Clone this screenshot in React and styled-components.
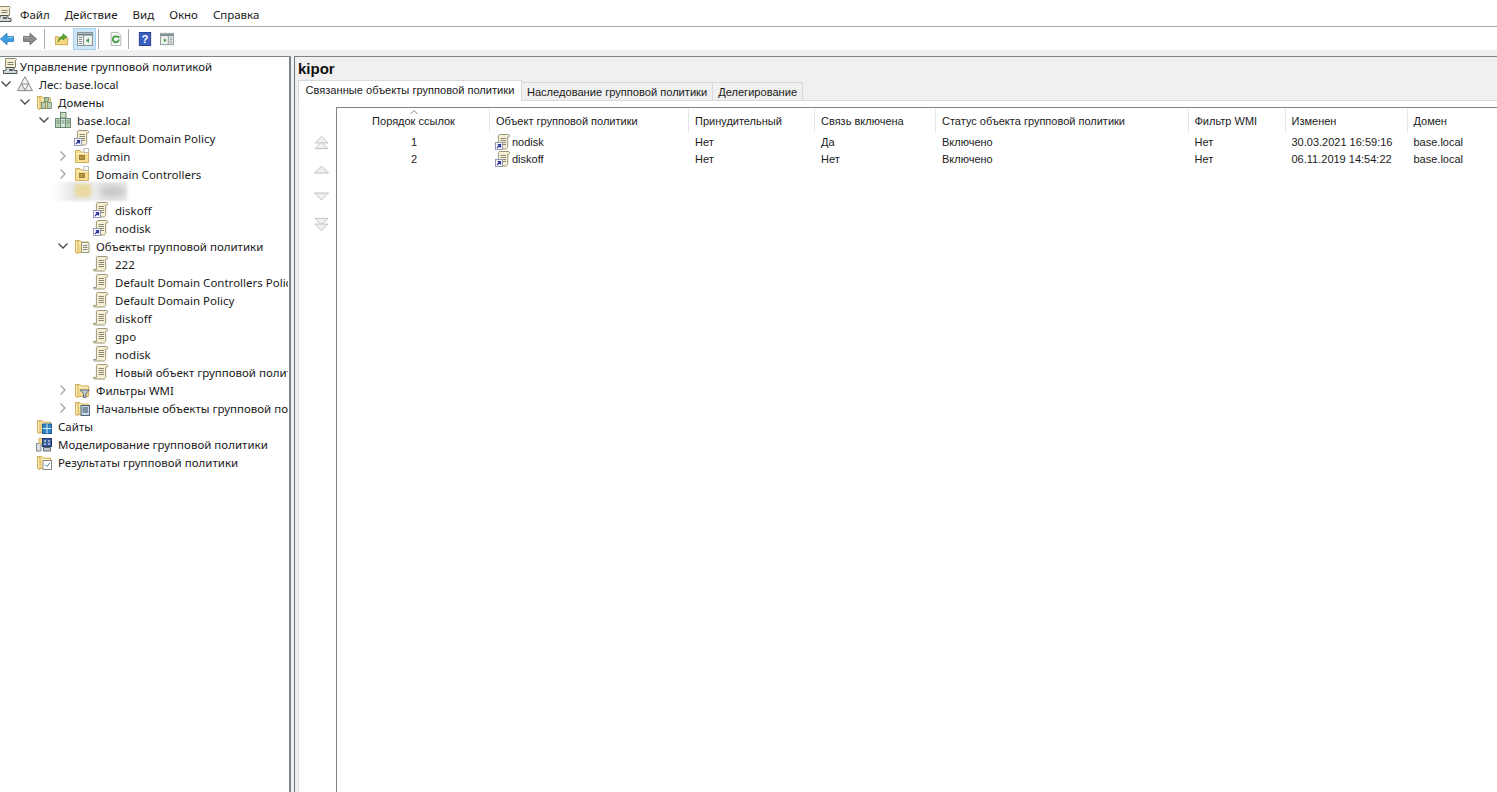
import React from "react";
import styled, { createGlobalStyle } from "styled-components";

const GlobalStyle = createGlobalStyle`
  html, body {
    margin: 0;
    padding: 0;
    height: 100%;
    background: #fff;
    overflow: hidden;
  }
  #root {
    height: 100%;
  }
`;

const Window = styled.div`
  display: flex;
  flex-direction: column;
  height: 792px;
  overflow: hidden;
  background: #f0f0f0;
  color: #1a1a1a;
  font-family: "Noto Sans", "Open Sans", sans-serif;
  font-size: 11.5px;
`;

const MenuBar = styled.div`
  display: flex;
  align-items: center;
  height: 24px;
  padding-top: 2px;
  flex: none;
  background: #fff;
  border-bottom: 1px solid #a8a8a8;
`;

const MenuIcon = styled.span`
  display: flex;
  width: 20px;
  margin-left: -4px;
  margin-right: 4px;
`;

const MenuItem = styled.span`
  margin-right: ${({ $gap }) => $gap}px;
`;

const Toolbar = styled.div`
  display: flex;
  align-items: center;
  height: 23px;
  flex: none;
  background: #fff;
`;

const ToolButton = styled.span`
  display: flex;
  align-items: center;
  justify-content: center;
  height: 22px;
  width: ${({ $w }) => $w || 16}px;
  margin-left: ${({ $ml }) => $ml || 0}px;
  box-sizing: border-box;
  background: ${({ $active }) => ($active ? "#cfe6f8" : "transparent")};
  border: 1px solid ${({ $active }) => ($active ? "#a6d2f2" : "transparent")};
`;

const ToolSep = styled.span`
  width: 1px;
  height: 20px;
  margin-left: ${({ $ml }) => $ml}px;
  background: #a8a8a8;
`;

const Body = styled.div`
  display: flex;
  flex: 1;
  min-height: 0;
  margin-top: 6px;
`;

const TreePane = styled.div`
  width: 289px;
  flex: none;
  background: #fff;
  border-top: 1px solid #7d8588;
  border-right: 2px solid #7d8588;
  overflow: hidden;
`;

const TreeRow = styled.div`
  position: relative;
  display: flex;
  align-items: center;
  height: 18px;
  width: 288px;
  overflow: ${({ $blurred }) => ($blurred ? "visible" : "hidden")};
  padding-left: ${({ $level, $root }) => ($root ? 2 : $level * 19)}px;
  box-sizing: border-box;
  white-space: nowrap;
`;

const Twisty = styled.span`
  display: flex;
  align-items: center;
  justify-content: center;
  width: 12px;
  height: 18px;
  margin-right: 5px;
  flex: none;
  visibility: ${({ $hidden }) => ($hidden ? "hidden" : "visible")};
`;

const TreeIcon = styled.span`
  display: flex;
  width: 16px;
  flex: none;
  margin-right: ${({ $root }) => ($root ? 2 : 6)}px;
`;

const Smudge = styled.span`
  position: absolute;
  left: 53px;
  top: -1px;
  width: 74px;
  height: 19px;
  background: linear-gradient(to right, #fff 0, #e6e6e6 27%, #ececec 55%, #e2e2e2 78%, #ececec 100%);
  filter: blur(1px);
`;

const SmudgeFolder = styled.span`
  position: absolute;
  left: 22px;
  top: 2px;
  width: 16px;
  height: 13px;
  background: #ead9a0;
  filter: blur(1.5px);
`;

const SmudgeMark = styled.span`
  position: absolute;
  left: 48px;
  top: 5px;
  width: 24px;
  height: 9px;
  background: #c4c4c4;
  filter: blur(3px);
`;

const DetailPane = styled.div`
  display: flex;
  flex-direction: column;
  flex: 1;
  min-width: 0;
  margin-left: 3px;
  padding-left: 3px;
  border-left: 1px solid #6f7578;
  border-top: 1px solid #7d8588;
`;

const DetailTitle = styled.div`
  height: 21px;
  flex: none;
  padding-top: 2px;
  font-family: "Liberation Sans", Arial, sans-serif;
  font-size: 15px;
  line-height: 19px;
  font-weight: 700;
  color: #111;
`;

const TabStrip = styled.div`
  display: flex;
  align-items: flex-end;
  height: 20px;
  flex: none;
  border-bottom: 1px solid #d9d9d9;
  font-family: "Liberation Sans", Arial, sans-serif;
  font-size: 11.1px;
`;

const Tab = styled.div`
  box-sizing: border-box;
  height: ${({ $active }) => ($active ? 21 : 18)}px;
  line-height: ${({ $active }) => ($active ? 18 : 19)}px;
  margin-bottom: ${({ $active }) => ($active ? -1 : 0)}px;
  padding: 0 ${({ $pad }) => $pad}px;
  background: ${({ $active }) => ($active ? "#fff" : "#f0f0f0")};
  border: 1px solid #d9d9d9;
  border-bottom: none;
  border-left: ${({ $active }) => ($active ? "1px solid #d9d9d9" : "none")};
  white-space: nowrap;
  position: relative;
`;

const TabPanel = styled.div`
  display: flex;
  flex: 1;
  min-height: 0;
  padding-top: 6px;
  background: #fff;
  border-left: 1px solid #e0e0e0;
`;

const MoverColumn = styled.div`
  display: flex;
  flex-direction: column;
  align-items: center;
  width: 37px;
  flex: none;
  padding-left: 7px;
  box-sizing: border-box;
`;

const Mover = styled.span`
  display: flex;
  margin-top: ${({ $mt }) => $mt}px;
`;

const ListFrame = styled.div`
  flex: 1;
  min-width: 0;
  border-top: 1px solid #7d8588;
  border-left: 1px solid #7d8588;
  font-family: "Liberation Sans", Arial, sans-serif;
  font-size: 11px;
  overflow: hidden;
`;

const columns = "153px 199px 126px 121px 252.5px 97px 122px 1fr";

const HeaderRow = styled.div`
  display: grid;
  grid-template-columns: ${columns};
  height: 25px;
  align-items: stretch;
`;

const HeaderCell = styled.div`
  position: relative;
  display: flex;
  align-items: center;
  justify-content: ${({ $center }) => ($center ? "center" : "flex-start")};
  padding-left: ${({ $center }) => ($center ? 1 : 6)}px;
  margin: 1px 0;
  border-right: ${({ $last }) => ($last ? "none" : "1px solid #e5e5e5")};
  white-space: nowrap;
`;

const SortMark = styled.span`
  position: absolute;
  top: -1px;
  left: 73px;
  display: flex;
`;

const DataRow = styled.div`
  display: grid;
  grid-template-columns: ${columns};
  height: 17px;
  align-items: center;
`;

const DataCell = styled.div`
  display: flex;
  align-items: center;
  justify-content: ${({ $center }) => ($center ? "center" : "flex-start")};
  padding-left: ${({ $center, $pad }) => ($center ? 1 : $pad || 6)}px;
  white-space: nowrap;
`;

const CellIcon = styled.span`
  display: flex;
  width: 16px;
  margin-right: 1px;
`;

/* icons */

const Svg = ({ size = 16, vb = "0 0 16 16", children }) => (
  <svg width={size} height={size} viewBox={vb} style={{ display: "block" }}>
    {children}
  </svg>
);

const ChevronDown = () => (
  <Svg size={12} vb="0 0 12 12">
    <path d="M1.5 3.5 6 8l4.5-4.5" fill="none" stroke="#4a4a4a" strokeWidth="1.4" />
  </Svg>
);

const ChevronRight = () => (
  <Svg size={12} vb="0 0 12 12">
    <path d="M3.5 1.5 8 6l-4.5 4.5" fill="none" stroke="#a6a6a6" strokeWidth="1.4" />
  </Svg>
);

const Scroll = ({ linked }) => (
  <Svg>
    <path
      d="M5 .5h8.4c.8 0 1.3.6 1.3 1.3 0 .7-.5 1.2-1.2 1.2H12.7v9.5c0 1.4-.8 2.5-2 2.5H1.8C.9 15 .3 14.3.3 13.5h3.1V2c0-.9.6-1.5 1.6-1.5z"
      fill="#f6efd4"
      stroke="#9a9778"
    />
    <path d="M5.5 4.5h5.5M5.5 6.5h5.5M5.5 8.5h5.5M5.5 10.5h5.5" stroke="#8a8a78" />
    {linked && (
      <>
        <rect x="0.5" y="8.5" width="7" height="7" fill="#fff" stroke="#9298b5" />
        <path d="M2 14l3-3M2.7 10.7H5.5v2.8" fill="none" stroke="#2b339a" strokeWidth="1.3" />
      </>
    )}
  </Svg>
);

const FolderBase = ({ children, open }) => (
  <Svg>
    <path d="M1.5 14.5V2.5h4.5l1.5 1.5h7v10.5z" fill="#f8de92" stroke="#d2b060" />
    <path d="M2.5 5.5h11.5" stroke="#fdf2c8" />
    {open && <path d="M1.5 2.5v12l2.5 1V3.5z" fill="#fcedb8" stroke="#d2b060" />}
    {children}
  </Svg>
);

const ServerBlocks = ({ x, y }) => (
  <g transform={`translate(${x} ${y})`}>
    <rect x="3" y="0" width="4" height="4" fill="#a9c4a2" stroke="#5d7d6c" strokeWidth="0.7" />
    <rect x="0" y="5" width="4" height="6" fill="#b8d0b0" stroke="#5d7d6c" strokeWidth="0.7" />
    <rect x="6" y="5" width="4" height="6" fill="#b8d0b0" stroke="#5d7d6c" strokeWidth="0.7" />
  </g>
);

const Domains = () => (
  <FolderBase open>
    <ServerBlocks x={5.5} y={3.5} />
  </FolderBase>
);

const Domain = () => (
  <Svg>
    <rect x="5.5" y="0.5" width="5.5" height="5.5" fill="#c7dcc0" stroke="#6b8a7c" />
    <rect x="0.5" y="6.5" width="5" height="9" fill="#bcd4b2" stroke="#6b8a7c" />
    <rect x="5.5" y="6.5" width="5" height="9" fill="#dceada" stroke="#6b8a7c" />
    <rect x="10.5" y="6.5" width="5" height="9" fill="#bcd4b2" stroke="#6b8a7c" />
    <path d="M1.5 9h3M1.5 11h3M11.5 9h3M11.5 11h3M6.5 9h3M6.5 11h3" stroke="#6b8a7c" />
  </Svg>
);

const Forest = () => (
  <Svg size={18} vb="0 0 18 18">
    <path d="M9 .8 13.5 9h-9z" fill="#f4f4f4" stroke="#7c7c7c" />
    <path d="M5 8.5 9.4 16.5H.6z" fill="#e4e4e4" stroke="#7c7c7c" />
    <path d="M13 8.5 17.4 16.5H8.6z" fill="#ececec" stroke="#7c7c7c" />
  </Svg>
);

const OrgUnit = () => (
  <FolderBase>
    <rect x="5.5" y="7.5" width="5" height="4" fill="#b4973f" stroke="#8a7230" strokeWidth="0.8" />
    <rect x="10" y="0.5" width="4.5" height="4" fill="#fff" stroke="#bcbcbc" />
  </FolderBase>
);

const GpoFolder = () => (
  <FolderBase open>
    <path d="M7.5 4.5h6.5c.7 0 1 .5 1 1v9H7.5z" fill="#f9f5e4" stroke="#9a9778" />
    <path d="M9 7.5h4.5M9 9.5h4.5M9 11.5h4.5" stroke="#85857a" />
  </FolderBase>
);

const FilterFolder = () => (
  <FolderBase open>
    <path d="M6 8h9.5l-3.5 3.4v4h-2.5v-4z" fill="#c0ced4" stroke="#5c6c74" />
  </FolderBase>
);

const StarterFolder = () => (
  <FolderBase open>
    <rect x="7" y="5.5" width="8.5" height="10" fill="#c8d8e8" stroke="#4d6478" />
    <path d="M8.5 8h5.5M8.5 10h5.5M8.5 12h5.5" stroke="#34485c" />
  </FolderBase>
);

const SitesFolder = () => (
  <FolderBase open>
    <rect x="6.5" y="6" width="9" height="9.5" fill="#2f86c8" stroke="#1d5b8e" />
    <path d="M11 6v9.5M6.5 10.5h9" stroke="#d8ecf8" />
  </FolderBase>
);

const Modeling = () => (
  <Svg>
    <path d="M.5 7.5h4.5V15H.5z" fill="#dfe3e6" stroke="#7a858b" />
    <path d="M3 2.5h6v5H3z" fill="#f8de92" stroke="#d2b060" />
    <rect x="6.5" y="2.5" width="9" height="8" fill="#3d5f9e" stroke="#20386a" />
    <path d="M8 5h2M12 5h2M8 8h2M12 8h2" stroke="#fff" />
    <path d="M7.5 11.5h7v3.5h-7z" fill="#c7ccd2" stroke="#5f6870" />
  </Svg>
);

const ResultsFolder = () => (
  <FolderBase open>
    <rect x="7" y="6.5" width="8.5" height="9" fill="#fff" stroke="#8a8a8a" />
    <path d="M9 10.5l2 2 3-4" fill="none" stroke="#3f7fb0" />
  </FolderBase>
);

const Console = () => (
  <Svg>
    <path d="M3.5.5h10l1 1-1 1v7H3.5z" fill="#f6efd4" stroke="#8a8870" />
    <path d="M5.5 4.5h6M5.5 6.5h6" stroke="#808070" />
    <path d="M1.5 13.5c-.8 0-1-1 0-1h2l1-3h7l1 3h2.5v3H1.5z" fill="#d3d8d8" stroke="#4a5656" />
    <path d="M7 12h4" stroke="#2d3a3a" strokeWidth="1.4" />
  </Svg>
);

const BackArrow = () => (
  <Svg>
    <path d="M.5 8 8 1.5v3.7h7.5v5.6H8v3.7z" fill="#3ea0e0" stroke="#2a7cbc" />
    <path d="M8.5 6.2h6.5" stroke="#fff" strokeOpacity="0.5" />
  </Svg>
);

const ForwardArrow = () => (
  <Svg>
    <path d="M15.5 8 8 1.5v3.7H.5v5.6H8v3.7z" fill="#8d8d8d" stroke="#686868" />
    <path d="M1 6.2h6.5" stroke="#fff" strokeOpacity="0.4" />
  </Svg>
);

const FolderUp = () => (
  <Svg>
    <path d="M.5 14.5V5.5h4l1 1h9v8z" fill="#f5d77f" stroke="#c2a04a" />
    <path d="M3.5 11.5C4 7.5 6 5 9 4.5V2l4.5 3.5L9 9V7c-2 .3-4 2-5.5 4.5z" fill="#5aa832" stroke="#3b8222" strokeWidth="0.7" />
  </Svg>
);

const PaneIcon = ({ right }) => (
  <Svg>
    <rect x="0.5" y="1.5" width="15" height="13" fill="#eef1f0" stroke="#8a9595" />
    <path d="M1 3.5h14" stroke="#6d8088" strokeWidth="2" />
    {right ? (
      <>
        <path d="M9.5 4v10" stroke="#8a9595" />
        <path d="M4.5 7l3 2.5-3 2.5z" fill="#3fa34d" />
        <path d="M11 6.5h3M11 8.5h3M11 10.5h3M11 12.5h3" stroke="#8a9595" />
      </>
    ) : (
      <>
        <path d="M6.5 4v10" stroke="#8a9595" />
        <path d="M2 6.5h3M2 8.5h3M2 10.5h3M2 12.5h3" stroke="#8a9595" />
        <path d="M12 7l-3 2.5 3 2.5z" fill="#3fa34d" />
      </>
    )}
  </Svg>
);

const Refresh = () => (
  <Svg>
    <path d="M2.5.5h8l3 3v12h-11z" fill="#f6f8f6" stroke="#a8b2ad" />
    <path d="M11.2 8.5a3.4 3.4 0 1 1-1-2.6" fill="none" stroke="#3f9a3a" strokeWidth="2" />
    <path d="M8.5 4.2l3.5.3-.4 3.3z" fill="#3f9a3a" />
  </Svg>
);

const Help = () => (
  <Svg>
    <rect x="1.5" y="0.5" width="13" height="15" fill="#3a5fc4" stroke="#24378a" />
    <text
      x="8"
      y="13"
      textAnchor="middle"
      fontFamily="'Liberation Sans', Arial, sans-serif"
      fontWeight="700"
      fontSize="13"
      fill="#fff"
    >
      ?
    </text>
  </Svg>
);

const Triangles = ({ down, double }) => {
  const one = down ? "M.5 1.5h14L7.5 8.5z" : "M.5 8.5h14L7.5 1.5z";
  return (
    <Svg size={15} vb={double ? "0 0 15 16" : "0 0 15 10"}>
      {double ? (
        <>
          <path d={one} fill="#f0f0f0" stroke="#c0c0c0" />
          <path d={one} transform="translate(0 6)" fill="#f0f0f0" stroke="#c0c0c0" />
        </>
      ) : (
        <path d={one} fill="#f0f0f0" stroke="#c0c0c0" />
      )}
    </Svg>
  );
};

/* data */

const tree = [
  { level: 0, root: true, icon: <Console />, text: "Управление групповой политикой" },
  { level: 0, twisty: "open", icon: <Forest />, text: "Лес: base.local" },
  { level: 1, twisty: "open", icon: <Domains />, text: "Домены" },
  { level: 2, twisty: "open", icon: <Domain />, text: "base.local" },
  { level: 3, icon: <Scroll linked />, text: "Default Domain Policy" },
  { level: 3, twisty: "closed", icon: <OrgUnit />, text: "admin" },
  { level: 3, twisty: "closed", icon: <OrgUnit />, text: "Domain Controllers" },
  { level: 3, blurred: true },
  { level: 4, icon: <Scroll linked />, text: "diskoff" },
  { level: 4, icon: <Scroll linked />, text: "nodisk" },
  { level: 3, twisty: "open", icon: <GpoFolder />, text: "Объекты групповой политики" },
  { level: 4, icon: <Scroll />, text: "222" },
  { level: 4, icon: <Scroll />, text: "Default Domain Controllers Policy" },
  { level: 4, icon: <Scroll />, text: "Default Domain Policy" },
  { level: 4, icon: <Scroll />, text: "diskoff" },
  { level: 4, icon: <Scroll />, text: "gpo" },
  { level: 4, icon: <Scroll />, text: "nodisk" },
  { level: 4, icon: <Scroll />, text: "Новый объект групповой политики" },
  { level: 3, twisty: "closed", icon: <FilterFolder />, text: "Фильтры WMI" },
  { level: 3, twisty: "closed", icon: <StarterFolder />, text: "Начальные объекты групповой политики" },
  { level: 1, icon: <SitesFolder />, text: "Сайты" },
  { level: 1, icon: <Modeling />, text: "Моделирование групповой политики" },
  { level: 1, icon: <ResultsFolder />, text: "Результаты групповой политики" },
];

const headers = [
  "Порядок ссылок",
  "Объект групповой политики",
  "Принудительный",
  "Связь включена",
  "Статус объекта групповой политики",
  "Фильтр WMI",
  "Изменен",
  "Домен",
];

const rows = [
  ["1", "nodisk", "Нет", "Да", "Включено", "Нет", "30.03.2021 16:59:16", "base.local"],
  ["2", "diskoff", "Нет", "Нет", "Включено", "Нет", "06.11.2019 14:54:22", "base.local"],
];

const Node = ({ node }) => {
  if (node.blurred) {
    return (
      <TreeRow $level={node.level} $blurred>
        <Smudge>
          <SmudgeFolder />
          <SmudgeMark />
        </Smudge>
      </TreeRow>
    );
  }
  return (
    <TreeRow $level={node.level} $root={node.root}>
      {!node.root && (
        <Twisty $hidden={!node.twisty}>
          {node.twisty === "open" ? <ChevronDown /> : <ChevronRight />}
        </Twisty>
      )}
      <TreeIcon $root={node.root}>{node.icon}</TreeIcon>
      {node.text}
    </TreeRow>
  );
};

export default function App() {
  return (
    <Window>
      <GlobalStyle />
      <MenuBar>
        <MenuIcon>
          <Console />
        </MenuIcon>
        <MenuItem $gap={15}>Файл</MenuItem>
        <MenuItem $gap={15}>Действие</MenuItem>
        <MenuItem $gap={15}>Вид</MenuItem>
        <MenuItem $gap={15}>Окно</MenuItem>
        <MenuItem $gap={0}>Справка</MenuItem>
      </MenuBar>
      <Toolbar>
        <ToolButton $ml={-1}>
          <BackArrow />
        </ToolButton>
        <ToolButton $ml={7}>
          <ForwardArrow />
        </ToolButton>
        <ToolSep $ml={6} />
        <ToolButton $ml={9}>
          <FolderUp />
        </ToolButton>
        <ToolButton $active $w={23} $ml={3}>
          <PaneIcon />
        </ToolButton>
        <ToolSep $ml={2} />
        <ToolButton $ml={9}>
          <Refresh />
        </ToolButton>
        <ToolSep $ml={4} />
        <ToolButton $ml={8}>
          <Help />
        </ToolButton>
        <ToolButton $ml={6}>
          <PaneIcon right />
        </ToolButton>
      </Toolbar>
      <Body>
        <TreePane>
          {tree.map((node, index) => (
            <Node key={index} node={node} />
          ))}
        </TreePane>
        <DetailPane>
          <DetailTitle>kipor</DetailTitle>
          <TabStrip>
            <Tab $active $pad={6.5}>
              Связанные объекты групповой политики
            </Tab>
            <Tab $pad={5}>Наследование групповой политики</Tab>
            <Tab $pad={5}>Делегирование</Tab>
          </TabStrip>
          <TabPanel>
            <MoverColumn>
              <Mover $mt={28}>
                <Triangles double />
              </Mover>
              <Mover $mt={12}>
                <Triangles />
              </Mover>
              <Mover $mt={12}>
                <Triangles down />
              </Mover>
              <Mover $mt={13}>
                <Triangles down double />
              </Mover>
            </MoverColumn>
            <ListFrame>
              <HeaderRow>
                {headers.map((title, index) => (
                  <HeaderCell key={title} $center={index === 0} $last={index === headers.length - 1}>
                    {index === 0 && (
                      <SortMark>
                        <Svg size={8} vb="0 0 8 5">
                          <path d="M.5 4.5 4 1l3.5 3.5" fill="none" stroke="#8a8a8a" />
                        </Svg>
                      </SortMark>
                    )}
                    {title}
                  </HeaderCell>
                ))}
              </HeaderRow>
              {rows.map((row) => (
                <DataRow key={row[0]}>
                  {row.map((value, index) => (
                    <DataCell key={index} $center={index === 0} $pad={index === 1 ? 5 : 6}>
                      {index === 1 && (
                        <CellIcon>
                          <Scroll linked />
                        </CellIcon>
                      )}
                      {value}
                    </DataCell>
                  ))}
                </DataRow>
              ))}
            </ListFrame>
          </TabPanel>
        </DetailPane>
      </Body>
    </Window>
  );
}
